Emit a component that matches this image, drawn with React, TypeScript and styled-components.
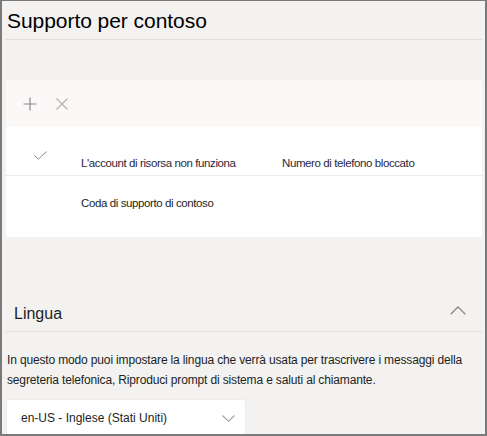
import styled, { createGlobalStyle } from 'styled-components';

const GlobalStyle = createGlobalStyle`
    html, body {
        margin: 0;
        padding: 0;
        background: #ffffff;
    }

    * {
        box-sizing: border-box;
    }
`;

const rows = [
    { checked: true, name: "L'account di risorsa non funziona", detail: 'Numero di telefono bloccato', accent: true },
    { checked: false, name: 'Coda di supporto di contoso', detail: '', accent: false },
];

const App = () => {
    return (
        <>
        <GlobalStyle />
        <Frame>
            <Header>
                <Title>Supporto per contoso</Title>
            </Header>

            <Card>
                <Toolbar>
                    <ToolButton aria-label="Aggiungi" tone="#8a8696">
                        <svg width="14" height="14" viewBox="0 0 14 14">
                            <path d="M7 0.5V13.5M0.5 7H13.5" stroke="currentColor" strokeWidth="1.2" fill="none" />
                        </svg>
                    </ToolButton>
                    <ToolButton aria-label="Rimuovi" tone="#b3b0ad">
                        <svg width="12" height="12" viewBox="0 0 12 12">
                            <path d="M0.5 0.5L11.5 11.5M11.5 0.5L0.5 11.5" stroke="currentColor" strokeWidth="1.1" fill="none" />
                        </svg>
                    </ToolButton>
                </Toolbar>

                <List>
                    {rows.map(row => (
                        <Row key={row.name} first={row.checked}>
                            <CheckCell>
                                {row.checked && (
                                    <svg width="13" height="9" viewBox="0 0 13 9">
                                        <path d="M0.5 4.5L4.3 8.2L12.5 0.5" stroke="#8a8886" strokeWidth="1" fill="none" />
                                    </svg>
                                )}
                            </CheckCell>
                            <NameCell accent={row.accent}>{row.name}</NameCell>
                            <NameCell accent={row.accent}>{row.detail}</NameCell>
                        </Row>
                    ))}
                </List>
            </Card>

            <Section>
                <SectionHeader>
                    <SectionTitle>Lingua</SectionTitle>
                    <svg width="16" height="9" viewBox="0 0 16 9">
                        <path d="M0.7 8.3L8 1L15.3 8.3" stroke="#8a8886" strokeWidth="1.3" fill="none" />
                    </svg>
                </SectionHeader>

                <Description>
                    In questo modo puoi impostare la lingua che verrà usata per trascrivere i messaggi della
                    segreteria telefonica, Riproduci prompt di sistema e saluti al chiamante.
                </Description>

                <Dropdown>
                    <span>en-US - Inglese (Stati Uniti)</span>
                    <svg width="13" height="7" viewBox="0 0 13 7">
                        <path d="M0.5 0.5L6.5 6.3L12.5 0.5" stroke="#a19f9d" strokeWidth="1.1" fill="none" />
                    </svg>
                </Dropdown>
            </Section>
        </Frame>
        </>
    );
};

const Frame = styled.div`
    width: 487px;
    height: 436px;
    overflow: hidden;
    background: #f3f2f1;
    border: 2px solid #7a7a7a;
    border-top-width: 1px;
    padding: 0 3px 0 4px;
    font-family: "Segoe UI", "Liberation Sans", Arial, sans-serif;
    color: #201f1e;
    display: flex;
    flex-direction: column;

    & > * {
        flex-shrink: 0;
    }
`;

const Header = styled.header`
    height: 39px;
    border-bottom: 1px solid #e1dfdd;
    display: flex;
    align-items: center;
    padding: 2px 1px 0;
`;

const Title = styled.h1`
    margin: 0;
    font-size: 21px;
    font-weight: 400;
    color: #000000;
    letter-spacing: -0.05px;
`;

const Card = styled.section`
    margin-top: 40px;
    border-radius: 3px;
    overflow: hidden;
    background: #ffffff;
`;

const Toolbar = styled.div`
    height: 47px;
    background: #faf9f8;
    display: flex;
    align-items: center;
    gap: 18px;
    padding-left: 17px;
`;

const ToolButton = styled.button<{ tone: string }>`
    width: 14px;
    height: 14px;
    padding: 0;
    border: 0;
    background: none;
    color: ${props => props.tone};
    display: flex;
    align-items: center;
    justify-content: center;
`;

const List = styled.div`
    display: flex;
    flex-direction: column;
`;

const Row = styled.div<{ first: boolean }>`
    display: grid;
    grid-template-columns: 75px 201px 1fr;
    align-items: center;
    height: ${props => (props.first ? '49px' : '61px')};
    padding: ${props => (props.first ? '23px 0 0' : '0 0 7px')};
    border-bottom: ${props => (props.first ? '1px solid #edebe9' : 'none')};
    font-size: 11.5px;
`;

const CheckCell = styled.div`
    display: flex;
    padding-left: 28px;
    margin-top: -14px;
`;

const NameCell = styled.span<{ accent: boolean }>`
    color: ${props => (props.accent ? '#2d1f3d' : '#201f1e')};
    white-space: nowrap;
    letter-spacing: -0.4px;
`;

const Section = styled.section`
    margin-top: 56px;
    display: flex;
    flex-direction: column;
`;

const SectionHeader = styled.div`
    height: 39px;
    border-bottom: 1px solid #e1dfdd;
    display: flex;
    align-items: center;
    justify-content: space-between;
    padding: 4px 16px 0 8px;

    svg {
        margin-bottom: 8px;
    }
`;

const SectionTitle = styled.h2`
    margin: 0;
    font-size: 16px;
    font-weight: 400;
    color: #201f1e;
`;

const Description = styled.p`
    margin: 18px 0 0 1px;
    font-size: 12px;
    line-height: 20px;
    color: #201f1e;
    letter-spacing: -0.15px;
    max-width: 474px;
`;

const Dropdown = styled.div`
    margin-top: 9px;
    width: 240px;
    height: 40px;
    background: #ffffff;
    border: 1px solid #edebe9;
    border-radius: 3px;
    display: flex;
    align-items: center;
    justify-content: space-between;
    padding: 0 10px 2px 14px;
    font-size: 12px;
    color: #201f1e;
`;

export default App;
